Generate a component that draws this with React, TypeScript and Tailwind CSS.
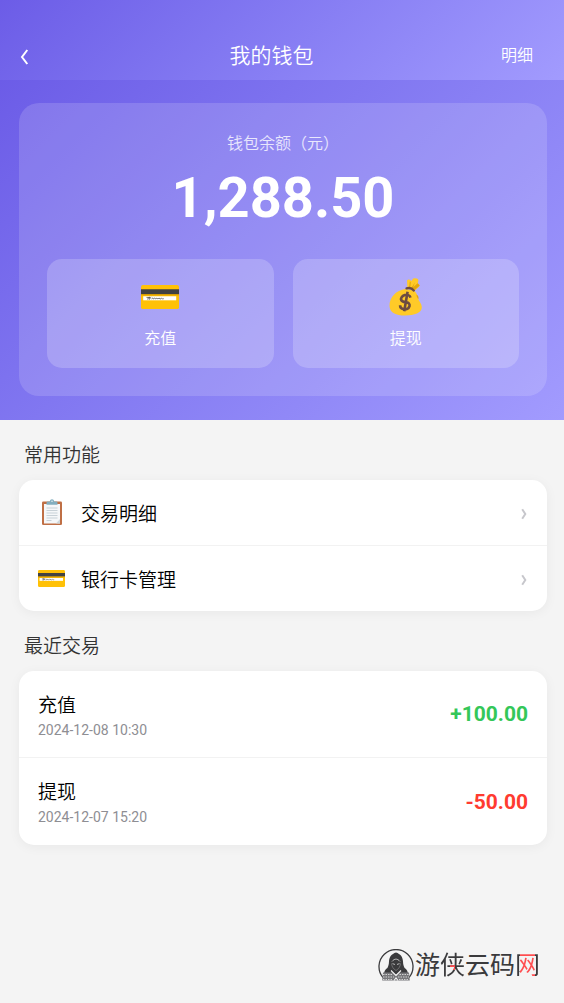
import type { ReactNode } from 'react'

interface Transaction {
  title: string
  time: string
  amount: string
  income: boolean
}

const transactions: Transaction[] = [
  { title: '充值', time: '2024-12-08 10:30', amount: '+100.00', income: true },
  { title: '提现', time: '2024-12-07 15:20', amount: '-50.00', income: false },
]

function CardIcon({ className }: { className: string }) {
  return (
    <svg viewBox="0 0 38 26" className={className} preserveAspectRatio="none" aria-hidden="true">
      <rect width="38" height="26" rx="2" fill="#ffc107" />
      <rect y="4.6" width="38" height="5.4" fill="#424242" />
      <rect y="10" width="38" height="1.2" fill="#d99a00" />
      <rect x="2.2" y="12.2" width="33" height="4.4" fill="#fff" />
      <path
        d="M6 15.7 8.4 13.2 8 15.7 10.2 13.4M5.5 13.5h4M10.5 15l1.4-1 .5 1.2 1.5-1.2.7 1.1 1.4-1 .8 1 1.4-1 .8 1.3 1.4-1.2.8.9 1.6-.3"
        fill="none"
        stroke="#424242"
        strokeWidth="0.7"
      />
    </svg>
  )
}

function MoneyBagIcon({ className }: { className: string }) {
  return (
    <svg viewBox="0 0 34 38" className={className} aria-hidden="true">
      <path d="M18.4 9.2 18 2.6c.7-1 2-1.4 3-.6l1.4 1L24 .8c1.5-.8 3.6-.5 5 .2.6 1.6.2 2.7-.3 4.3l2 2.2c-1 2-3 3.3-4.6 4.7Z" fill="#ffca28" />
      <path d="m26 11.7 4.7-4.2-2-2.2-5.8 5Z" fill="#e2a610" />
      <path d="m20 9.6.8-6.2 1 .6-.5 5.8Zm2.3.5 3.6-5.5-2.2 6Z" fill="#e2a610" />
      <path d="M16.5 11C7 12 .5 19.5.5 27.5.5 35 7 37.5 16 37.5c9.5 0 16.8-2.8 16.8-8 0-4.5-3.2-6-3.8-9.5-.5-3-1.5-5.5-4.3-7.5Z" fill="#ffca28" />
      <path d="M27.6 16.4c1.6 1 2.3 3 1.9 4.7-1.3-1.3-2.2-3-1.9-4.7Z" fill="#e2a610" />
      <path d="M17.6 10.3c2.6-.8 5.6.1 7.2 2.100" fill="none" stroke="#6d4c41" strokeWidth="2.4" strokeLinecap="round" />
      <path
        d="M21.5 19.6c-.7-2.5-3.3-3.2-5.7-2.5-2.9.9-4.3 3.2-3.5 5 .8 1.8 3.1 1.9 5.2 2.3 2.2.4 3.5 1.5 3 3.7-.6 2.4-3.3 3.6-5.9 3.1-2.3-.4-3.6-1.9-3.5-3.9M18.6 13.7l-3.4 19.6"
        fill="none"
        stroke="#6d4c41"
        strokeWidth="2.6"
      />
    </svg>
  )
}

function ClipboardIcon({ className }: { className: string }) {
  return (
    <svg viewBox="0 0 20 26" className={className} aria-hidden="true">
      <rect y="2.5" width="20" height="23.5" rx="1.3" fill="#bf6f45" />
      <path d="M2 5h16v19.5H2Z" fill="#f5f7f9" />
      <path d="M14 24.5 18 20v4.5Z" fill="#cfd8dc" />
      <path d="M4.5 9h11M4.5 11.5h11M4.5 14h11M4.5 16.5h11M4.5 19h11M4.5 21.5h5" stroke="#c3ccd2" strokeWidth="0.9" />
      <path d="M4.5 5.8V3.9c0-1 .8-1.4 1.8-1.4h1.5C8 1 8.9.3 10 .3s2 .7 2.2 2.2h1.5c1 0 1.8.4 1.8 1.4v1.9Z" fill="#82aebf" />
      <circle cx="10" cy="2.3" r=".8" fill="#e3eef2" />
    </svg>
  )
}

function Chevron() {
  return (
    <svg viewBox="0 0 6 12" className="mr-px h-3 w-1.5" aria-hidden="true">
      <path d="M1.2 1.3 4.3 6 1.2 10.7" fill="none" stroke="#c7c7cc" strokeWidth="2" />
    </svg>
  )
}

function HackerLogo() {
  return (
    <svg viewBox="0 0 36 34" className="h-[34px] w-9" aria-hidden="true">
      <path d="M5 28.500A17 17 0 1 1 31 28.500" fill="none" stroke="#3a3a3c" strokeWidth="1.3" />
      <path d="M18 3.500c-4.500 1.400-6.800 4.600-7 9-.1 2.800-.6 4.600-1.600 6.500-2 1.200-3.300 3.200-3.500 6.500h24.200c-.2-3.300-1.500-5.300-3.500-6.500-1-1.900-1.500-3.700-1.600-6.500-.2-4.400-2.500-7.600-7-9Z" fill="#3a3a3c" />
      <path d="M14 12.500c2.500-3.200 5.500-3.200 8 0M14.500 14.600l2.500.9M21.500 14.600l-2.500.9" fill="none" stroke="#d8d8d8" strokeWidth=".8" />
      <path d="M13.500 14.500c.4 3.200 1.700 5.400 4.500 7 2.800-1.600 4.100-3.800 4.500-7" fill="none" stroke="#8e8e90" strokeWidth=".6" />
      <path d="M5 23.500h10l3 3 3-3h10l.8 8H4.200Z" fill="#77777a" />
      <path d="M5 25.500h9.500M5 28h11M5 30.500h10M21.500 25.500H31M20 28h11M21 30.500h10" stroke="#e8e8e8" strokeWidth=".8" strokeDasharray="1.500 1" />
      <path d="m13 21.500 5 5 5-5M16 31.500l2-2.500 2 2.500" fill="none" stroke="#f4f4f4" strokeWidth="1.1" />
    </svg>
  )
}

function QuickAction({ icon, label }: { icon: ReactNode; label: string }) {
  return (
    <button className="flex h-[109px] flex-1 flex-col items-center rounded-[15px] bg-white/20 pt-[18px]">
      <span className="flex h-10 items-center">{icon}</span>
      <span className="mt-2.5 text-[16px] leading-6">{label}</span>
    </button>
  )
}

function MenuItem({ icon, label }: { icon: ReactNode; label: string }) {
  return (
    <li>
      <a href="#" className="flex h-[65px] items-center px-[19px] pt-[3px]">
        <span className="flex w-[43px] items-center pb-1">{icon}</span>
        <span className="flex-1 pt-0.5 text-[19px] leading-7 text-black">{label}</span>
        <Chevron />
      </a>
    </li>
  )
}

function Section({ title, children }: { title: string; children: ReactNode }) {
  return (
    <section className="pr-[17px] pl-[19px]">
      <h2 className="px-[5px] pt-[22px] pb-2.5 text-[19px] leading-7 text-[#333]">{title}</h2>
      <ul className="divide-y divide-[#f2f2f2] overflow-hidden rounded-[15px] bg-white shadow-[0_2px_12px_rgba(0,0,0,0.05)]">
        {children}
      </ul>
    </section>
  )
}

export default function App() {
  return (
    <div className="flex min-h-screen flex-col bg-[#f4f4f4] font-['Roboto','Noto_Sans_CJK_SC',sans-serif] font-[350]">
      <header className="flex h-20 items-end justify-between bg-linear-135 from-[#6c5ce7] to-[#a29bfe] pr-[31px] pb-2 pl-[19px] text-white">
        <button aria-label="返回" className="flex h-8 w-[23px] items-center pt-0.5">
          <svg viewBox="0 0 10 16" className="h-4 w-2.5" aria-hidden="true">
            <path d="M8.3 1 3 8l5.3 7" fill="none" stroke="currentColor" strokeWidth="2" />
          </svg>
        </button>
        <h1 className="text-[21px] leading-8">我的钱包</h1>
        <button className="text-[16px] leading-8">明细</button>
      </header>

      <div className="bg-linear-135 from-[#6c5ce7] to-[#a29bfe] pt-[23px] pr-[17px] pb-6 pl-[19px] text-white">
        <div className="rounded-[20px] bg-white/15 p-7 text-center">
          <p className="pt-px text-[16px] leading-6 text-white/80">钱包余额（元）</p>
          <p className="mt-[9px] mb-7 text-[56px] leading-[66px] font-bold">1,288.50</p>
          <div className="flex gap-[19px]">
            <QuickAction icon={<CardIcon className="h-6 w-[38px]" />} label="充值" />
            <QuickAction icon={<MoneyBagIcon className="h-[38px] w-[34px]" />} label="提现" />
          </div>
        </div>
      </div>

      <Section title="常用功能">
        <MenuItem icon={<ClipboardIcon className="ml-1 h-[26px] w-5" />} label="交易明细" />
        <MenuItem icon={<CardIcon className="h-[17px] w-[27px]" />} label="银行卡管理" />
      </Section>

      <Section title="最近交易">
        {transactions.map((item) => (
          <li key={item.time} className="flex h-[87px] items-center justify-between px-[19px]">
            <div className="pt-[3px]">
              <p className="text-[19px] leading-7 text-black">{item.title}</p>
              <p className="text-[14px] leading-5 font-normal text-[#8e8e93]">{item.time}</p>
            </div>
            <span className={`text-[21px] leading-7 font-bold ${item.income ? 'text-[#34c759]' : 'text-[#ff3b30]'}`}>
              {item.amount}
            </span>
          </li>
        ))}
      </Section>

      <footer className="mt-auto flex items-center justify-end gap-px pr-6 pb-5">
        <HackerLogo />
        <span className="text-[25px] leading-[34px] font-normal text-[#3a3a3c]">
          游
          <span className="bg-[linear-gradient(#ff4d4f,#ff4d4f),linear-gradient(#3a3a3c,#3a3a3c)] bg-size-[5px_5px,100%_100%] bg-position-[10px_14px,0_0] bg-no-repeat bg-clip-text text-transparent">侠</span>
          云码
          <span className="bg-[linear-gradient(90deg,#3a3a3c_18%,#ff4d4f_18%,#ff4d4f_80%,#3a3a3c_80%)] bg-clip-text text-transparent">网</span>
        </span>
      </footer>
    </div>
  )
}
